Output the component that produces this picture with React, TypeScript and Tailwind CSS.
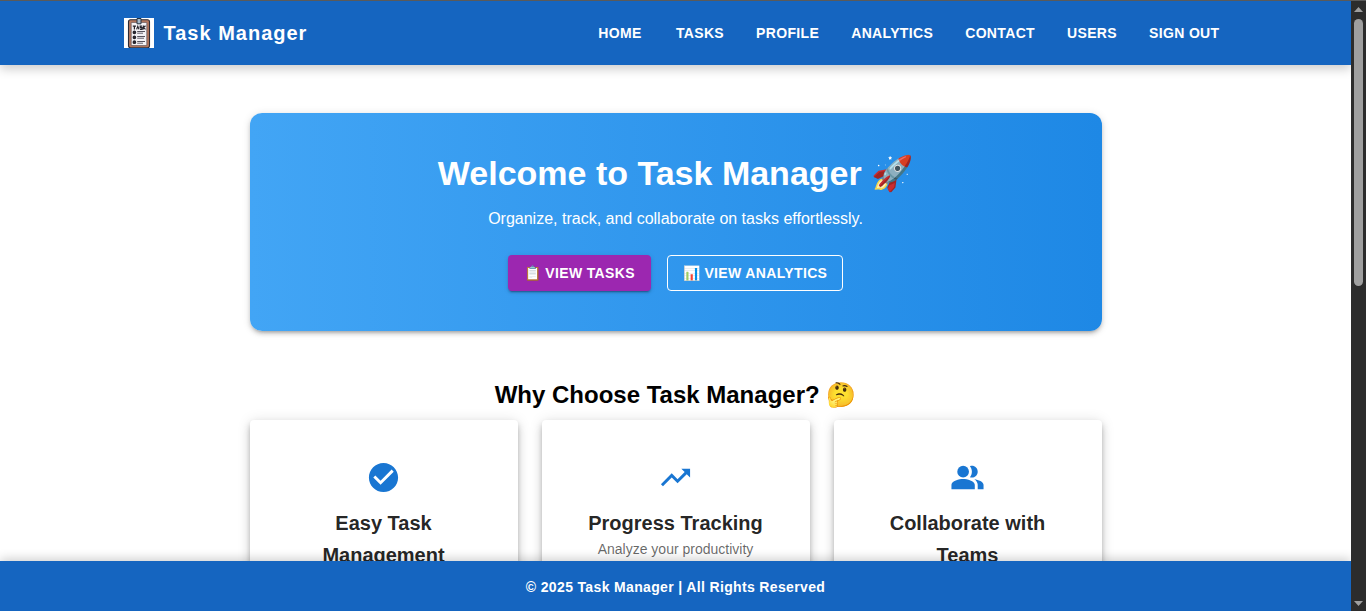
import type { ReactNode } from "react";

const navItems = ["Home", "Tasks", "Profile", "Analytics", "Contact", "Users", "Sign Out"];

function ClipboardLogo() {
  return (
    <svg viewBox="0 0 30 30" className="size-[30px] shrink-0" role="img" aria-label="Task Manager logo">
      <rect width="30" height="30" fill="#ffffff" />
      <rect x="4.5" y="1.8" width="21" height="28" rx="2" fill="#b5785f" stroke="#2b2b35" strokeWidth="1.1" />
      <rect x="7.2" y="4.4" width="15.6" height="23.2" rx="0.8" fill="#f4f2f5" stroke="#5d5054" strokeWidth="0.7" />
      <path d="M13 5.8V0.5h4v5.3z" fill="#a9bccb" stroke="#26303d" strokeWidth="1" />
      <g stroke="#25232b" strokeWidth="1.2" fill="none">
        <path d="M8.8 8.1h3.2M10.4 8.1v3.4M12.6 11.4l1.2-3 1.2 3M18 8.1h-1.8v1.6h1.8v1.6h-2M19.3 7.6v3.9M21.5 7.8l-2 1.8 2 1.8" />
        <circle cx="10.4" cy="14.3" r="1" strokeWidth="1.7" />
        <circle cx="10.4" cy="19.3" r="1" strokeWidth="1.7" />
        <circle cx="10.4" cy="24.2" r="1" strokeWidth="1.7" />
      </g>
      <path d="M13.2 13.5H21M13.2 18.5H21M13.2 23.5H21" stroke="#57535e" strokeWidth="1" />
      <path d="M13.2 15.2H19M13.2 20.2H20M13.2 25.2H19" stroke="#625e69" strokeWidth="1" />
    </svg>
  );
}

function Icon({ children }: { children: ReactNode }) {
  return (
    <svg viewBox="0 0 24 24" className="size-[35px] fill-[#1976d2]" aria-hidden="true">
      {children}
    </svg>
  );
}

const features = [
  {
    title: "Easy Task Management",
    text: "Create, edit and organize tasks with ease.",
    icon: (
      <path d="M12 2C6.48 2 2 6.48 2 12s4.48 10 10 10 10-4.48 10-10S17.52 2 12 2m-2 15-5-5 1.41-1.41L10 14.17l7.59-7.59L19 8z" />
    ),
  },
  {
    title: "Progress Tracking",
    text: "Analyze your productivity through detailed charts.",
    icon: <path d="m16 6 2.29 2.29-4.88 4.88-4-4L2 16.59 3.41 18l6-6 4 4 6.3-6.29L22 12V6z" />,
  },
  {
    title: "Collaborate with Teams",
    text: "Share tasks and work together.",
    icon: (
      <>
        <path d="M16.67 13.13C18.04 14.06 19 15.32 19 17v3h4v-3c0-2.18-3.57-3.47-6.33-3.87" />
        <circle cx="9" cy="8" r="4" />
        <path d="M15 12c2.21 0 4-1.79 4-4s-1.79-4-4-4c-.47 0-.91.1-1.33.24C14.5 5.27 15 6.58 15 8s-.5 2.73-1.33 3.76c.42.14.86.24 1.33.24M9 13c-2.67 0-8 1.34-8 4v3h16v-3c0-2.66-5.33-4-8-4" />
      </>
    ),
  },
];

function Header() {
  return (
    <header className="relative z-10 shrink-0 bg-[#1565c0] text-white shadow-[0_4px_10px_rgba(0,0,0,0.2)]">
      <div className="mx-auto flex h-16 max-w-[1200px] items-center justify-between px-12">
        <a href="#home" className="flex items-center gap-2.5 text-xl font-bold tracking-wider">
          <ClipboardLogo />
          Task Manager
        </a>
        <nav className="flex gap-4">
          {navItems.map((item) => (
            <a
              key={item}
              href="#"
              className="min-w-16 px-2 py-1.5 text-center text-sm leading-6 font-bold tracking-wide uppercase"
            >
              {item}
            </a>
          ))}
        </nav>
      </div>
    </header>
  );
}

function Hero() {
  return (
    <section className="rounded-xl bg-linear-to-r/srgb from-[#42a5f5] to-[#1e88e5] p-10 text-center text-white shadow-[0_3px_3px_-2px_rgba(0,0,0,0.2),0_3px_4px_rgba(0,0,0,0.14),0_1px_8px_rgba(0,0,0,0.12)]">
      <h1 className="mb-3.5 text-[34px] leading-10 font-bold">Welcome to Task Manager 🚀</h1>
      <p className="mb-6 text-base">Organize, track, and collaborate on tasks effortlessly.</p>
      <div className="flex justify-center gap-4">
        <button
          type="button"
          className="rounded bg-[#9c27b0] px-4 py-1.5 text-sm leading-6 font-bold tracking-wide uppercase shadow-[0_3px_1px_-2px_rgba(0,0,0,0.2),0_2px_2px_rgba(0,0,0,0.14),0_1px_5px_rgba(0,0,0,0.12)]"
        >
          📋 View Tasks
        </button>
        <button
          type="button"
          className="rounded border border-white px-[15px] py-[5px] text-sm leading-6 font-bold tracking-wide uppercase"
        >
          📊 View Analytics
        </button>
      </div>
    </section>
  );
}

function Features() {
  return (
    <section className="py-12">
      <h2 className="mb-[9px] text-center text-2xl leading-8 font-bold text-black">Why Choose Task Manager? 🤔</h2>
      <div className="grid grid-cols-3 gap-6">
        {features.map(({ title, text, icon }) => (
          <article
            key={title}
            className="flex flex-col items-center rounded bg-white p-10 text-center shadow-[0_3px_5px_-1px_rgba(0,0,0,0.2),0_5px_8px_rgba(0,0,0,0.14),0_1px_14px_rgba(0,0,0,0.12)]"
          >
            <Icon>{icon}</Icon>
            <h3 className="mt-3 text-xl leading-8 font-bold text-black/87">{title}</h3>
            <p className="text-sm text-black/60">{text}</p>
          </article>
        ))}
      </div>
    </section>
  );
}

function Scrollbar() {
  return (
    <div className="flex w-[15px] shrink-0 flex-col items-center bg-[#2c2c2c]" aria-hidden="true">
      <svg viewBox="0 0 15 18" className="h-[18px] w-[15px] fill-[#9f9f9f]">
        <path d="M7.5 6 12 11H3z" />
      </svg>
      <div className="flex w-full flex-1 justify-center">
        <div className="h-[46.5%] w-[9px] rounded-full bg-[#9f9f9f]" />
      </div>
      <svg viewBox="0 0 15 18" className="h-[18px] w-[15px] fill-[#9f9f9f]">
        <path d="M7.5 13 3 8h9z" />
      </svg>
    </div>
  );
}

export default function App() {
  return (
    <div className="flex h-screen overflow-hidden border-t border-[#5a5a5a] bg-white font-['Liberation_Sans',Arial,sans-serif]">
      <div className="flex min-w-0 flex-1 flex-col overflow-hidden">
        <Header />
        <main className="min-h-0 flex-1 overflow-y-auto [scrollbar-width:none]">
          <div className="mx-auto max-w-[900px] px-6 pt-12">
            <Hero />
            <Features />
          </div>
        </main>
        <footer className="relative z-10 shrink-0 bg-[#1565c0] pt-4 pb-3.5 text-center text-sm font-bold tracking-wide text-white shadow-[0_-2px_10px_rgba(0,0,0,0.2)]">
          © 2025 Task Manager | All Rights Reserved
        </footer>
      </div>
      <Scrollbar />
    </div>
  );
}
